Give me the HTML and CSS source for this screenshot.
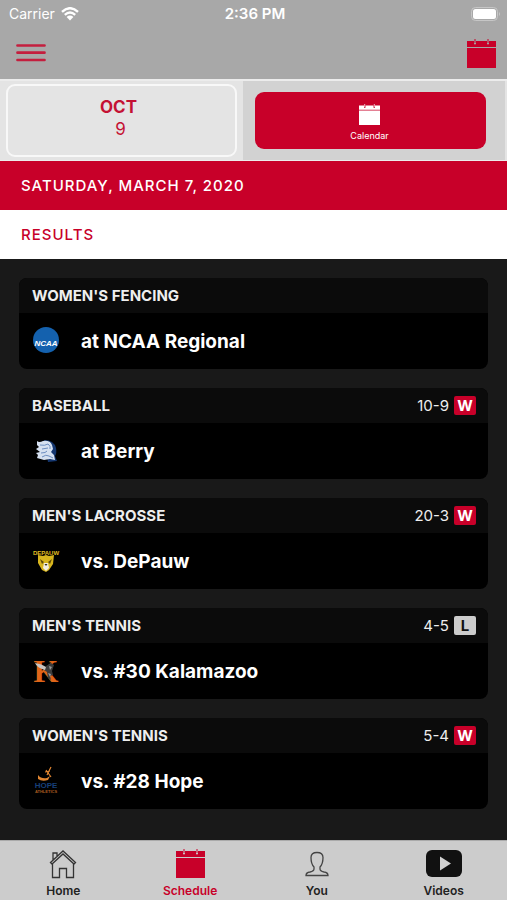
FILE: index.html
```html
<!DOCTYPE html>
<html lang="en">
<head>
    <meta charset="UTF-8">
    <meta name="viewport" content="width=device-width, initial-scale=1.0">
    <title>Schedule</title>
    <link rel="stylesheet" href="styles.css">
</head>
<body>
    <!-- Shared calendar icon -->
    <svg class="defs" width="0" height="0" aria-hidden="true">
        <symbol id="calendar" viewBox="0 0 29 29">
            <path d="M0 2h7v2.5a1 1 0 0 0 2 0V2h11v2.5a1 1 0 0 0 2 0V2h7v6H0zM0 9h29v20H0z"/>
            <path d="M7.5 0h1v4h-1zM20.5 0h1v4h-1z"/>
        </symbol>
    </svg>

    <header>
        <div class="status-bar">
            <div class="carrier">
                <span>Carrier</span>
                <svg width="18" height="14" viewBox="0 0 18 14" aria-hidden="true">
                    <path d="M1 4.8Q9-2.4 17 4.8M3.8 7.8q5.2-4.4 10.4 0" fill="none" stroke="#fff" stroke-width="2.4"/>
                    <path d="M5.6 10q3.4-2.8 6.8 0L9 13.6z" fill="#fff"/>
                </svg>
            </div>
            <span class="time">2:36 PM</span>
            <div class="battery">
                <svg width="30" height="14" viewBox="0 0 30 14" aria-hidden="true">
                    <rect x="0.5" y="0.5" width="26" height="13" rx="4" fill="none" stroke="#c6c6c6"/>
                    <rect x="2" y="2" width="23" height="10" rx="2.5" fill="#fff"/>
                    <path d="M28 5q2 2 0 4z" fill="#c6c6c6"/>
                </svg>
            </div>
        </div>
        <div class="nav-bar">
            <button class="icon-button" aria-label="Menu">
                <svg width="30" height="18" viewBox="0 0 30 18">
                    <path d="M1.5 1.5h27M1.5 8.7h27M1.5 16h27" stroke="#c41e3e" stroke-width="2.7" stroke-linecap="round"/>
                </svg>
            </button>
            <button class="icon-button" aria-label="Open calendar">
                <svg class="calendar-icon" width="29" height="29"><use href="#calendar"/></svg>
            </button>
        </div>
    </header>

    <div class="picker">
        <div class="picker-date">
            <button class="date-button">
                <span class="month">OCT</span>
                <span class="day">9</span>
            </button>
        </div>
        <div class="picker-calendar">
            <button class="calendar-button">
                <svg width="21" height="21"><use href="#calendar"/></svg>
                <span>Calendar</span>
            </button>
        </div>
    </div>

    <h1 class="date-heading">SATURDAY, MARCH 7, 2020</h1>
    <h2 class="results-heading">RESULTS</h2>

    <main>
        <article class="game">
            <div class="game-header">
                <h3>WOMEN'S FENCING</h3>
            </div>
            <div class="game-body">
                <svg class="logo" viewBox="0 0 28 28" role="img" aria-label="NCAA">
                    <circle cx="14" cy="13" r="13" fill="#1461ae"/>
                    <text x="14" y="19" text-anchor="middle" class="logo-text ncaa">NCAA</text>
                </svg>
                <p>at NCAA Regional</p>
            </div>
        </article>

        <article class="game">
            <div class="game-header">
                <h3>BASEBALL</h3>
                <div class="score">10-9 <span class="badge win">W</span></div>
            </div>
            <div class="game-body">
                <svg class="logo" viewBox="0 0 28 28" role="img" aria-label="Berry">
                    <path d="M12 3q10 0 12 8 1 5-1 8l2 5-9 1z" fill="#14366f"/>
                    <path d="M5 4q2 2 6 0 7-1 9 4l1 4-2 3 3 3 1 5-5-1-6 1-7-2 1-3-2-2 4-1-4-3 3-2-2-2z" fill="#d5e0f0"/>
                    <path d="M8 8q5 1 8-1 3 2 2 5M10 12l6-1M9 16q5 0 6-2M10 20q4-3 7-1l4 2" fill="none" stroke="#6c8dc0" stroke-width="1"/>
                </svg>
                <p>at Berry</p>
            </div>
        </article>

        <article class="game">
            <div class="game-header">
                <h3>MEN'S LACROSSE</h3>
                <div class="score">20-3 <span class="badge win">W</span></div>
            </div>
            <div class="game-body">
                <svg class="logo" viewBox="0 0 28 28" role="img" aria-label="DePauw">
                    <path d="M6 8l5 1 3-1 3 1 5-1-1 9-4 6-3 2-4-2-4-7z" fill="#d8b51d"/>
                    <path d="M8 12l4 3-2 2zM20 12l-4 3 2 2z" fill="#5d4a08"/>
                    <path d="M12 16h4l1 5-3 3-3-3z" fill="#f2eee0"/>
                    <path d="M12.500 17h3l-1.500 2z" fill="#332c14"/>
                    <text x="14" y="8" text-anchor="middle" class="logo-text depauw">DEPAUW</text>
                </svg>
                <p>vs. DePauw</p>
            </div>
        </article>

        <article class="game">
            <div class="game-header">
                <h3>MEN'S TENNIS</h3>
                <div class="score">4-5 <span class="badge loss">L</span></div>
            </div>
            <div class="game-body">
                <svg class="logo" viewBox="0 0 28 28" role="img" aria-label="Kalamazoo">
                    <text x="14" y="25" text-anchor="middle" class="logo-text kalamazoo">K</text>
                    <path d="M14 9l5-3 3 2-2 6 1 4-3 1 1 4-3-2-1-6-3-2z" fill="#3c3c3c"/>
                    <path d="M3 6q7 1 11 4l-1 3q-8-2-10-7z" fill="#c9c4c0"/>
                    <path d="M17 9l3 1-2 3zM16 16l3 1-1 3z" fill="#999"/>
                </svg>
                <p>vs. #30 Kalamazoo</p>
            </div>
        </article>

        <article class="game">
            <div class="game-header">
                <h3>WOMEN'S TENNIS</h3>
                <div class="score">5-4 <span class="badge win">W</span></div>
            </div>
            <div class="game-body">
                <svg class="logo" viewBox="0 0 28 28" role="img" aria-label="Hope">
                    <path d="M6 8q3 4 9 3l3-2-2 4q-6 2-10-1z" fill="#e28631"/>
                    <path d="M14 3l5 7M19 0l-4 8M13 5l5-1" fill="none" stroke="#e28631" stroke-width="1.200"/>
                    <text x="14" y="21" text-anchor="middle" class="logo-text hope">HOPE</text>
                    <text x="14" y="26" text-anchor="middle" class="logo-text athletics">ATHLETICS</text>
                </svg>
                <p>vs. #28 Hope</p>
            </div>
        </article>
    </main>

    <nav class="tab-bar">
        <a href="#home">
            <svg width="28" height="30" viewBox="0 0 28 30">
                <path d="M1.500 13.500L14 2l12.500 11.500-1.500 1.500L14 5 3 15zM3.500 14.500V28.500h7v-9h7v9h7v-14M4 11V4h4v3.500" fill="none" stroke="#333" stroke-width="1.300"/>
            </svg>
            <span>Home</span>
        </a>
        <a href="#schedule" class="active">
            <svg width="29" height="30" viewBox="0 0 29 30"><use href="#calendar" width="29" height="29"/></svg>
            <span>Schedule</span>
        </a>
        <a href="#you">
            <svg width="26" height="30" viewBox="0 0 26 30">
                <path d="M2 26.500q0-3 4-3.500 4-1 4-3v-2q-3-3-3-9.500 0-5 6-5t6 5q0 6.500-3 9.500v2q0 2 4 3 4 .5 4 3.500z" fill="none" stroke="#444" stroke-width="1.300"/>
            </svg>
            <span>You</span>
        </a>
        <a href="#videos">
            <svg width="38" height="30" viewBox="0 0 38 30">
                <rect x="1" y="1" width="36" height="27" rx="6" fill="#111"/>
                <path d="M15 7.500v14L26 14.500z" fill="#d2d2d2"/>
            </svg>
            <span>Videos</span>
        </a>
    </nav>
</body>
</html>
```

FILE: styles.css
```css
* {
    box-sizing: border-box;
}
body {
    display: flex;
    flex-direction: column;
    min-height: 100vh;
    margin: 0;
    font-family: Inter, 'Liberation Sans', sans-serif;
    color: #fff;
    background-color: #191919;
}
h1, h2, h3, p {
    margin: 0;
}
button {
    padding: 0;
    border: none;
    background: none;
    font-family: inherit;
    cursor: pointer;
}
svg {
    display: block;
    flex-shrink: 0;
}
.defs {
    position: absolute;
}

/* Header */
header {
    background-color: #a8a8a8;
}
.status-bar {
    display: grid;
    grid-template-columns: 1fr auto 1fr;
    align-items: center;
    height: 27px;
    padding: 0 6px 0 9px;
    font-size: 14px;
}
.carrier {
    display: flex;
    gap: 6px;
    align-items: center;
}
.time {
    font-size: 15px;
    font-weight: 600;
}
.battery {
    justify-self: end;
}
.nav-bar {
    display: flex;
    justify-content: space-between;
    align-items: center;
    height: 52px;
    padding: 0 11px 0 16px;
}
.calendar-icon {
    fill: #c80029;
}

/* Date picker */
.picker {
    display: flex;
    height: 82px;
    padding-right: 2px;
    border-top: 2px solid #ececec;
    border-bottom: 1px solid #ececec;
    background-color: #e4e4e4;
}
.picker-date {
    flex: 1;
    padding: 3px 6px;
}
.date-button {
    display: flex;
    flex-direction: column;
    align-items: center;
    justify-content: center;
    width: 100%;
    height: 100%;
    padding: 0 6px 6px 0;
    border: 2px solid #f8f8f8;
    border-radius: 9px;
    color: #c41234;
    font-size: 17px;
    line-height: 22px;
}
.month {
    font-weight: 700;
}
.day {
    padding-left: 4px;
}
.picker-calendar {
    flex: 1;
    padding: 11px 19px 11px 12px;
    background-color: #d2d2d2;
}
.calendar-button {
    display: flex;
    flex-direction: column;
    gap: 6px;
    align-items: center;
    justify-content: center;
    width: 100%;
    height: 100%;
    padding: 3px 2px 0 0;
    border-radius: 9px;
    background-color: #c80029;
    color: #fff;
    fill: #fff;
    font-size: 9px;
    line-height: 10px;
}

/* Section headings */
.date-heading,
.results-heading {
    padding: 0 21px;
    font-size: 15px;
    font-weight: 500;
    line-height: 49px;
    letter-spacing: 1px;
}
.date-heading {
    background-color: #c80029;
}
.results-heading {
    background-color: #fff;
    color: #c80029;
}

/* Games */
main {
    display: flex;
    flex: 1;
    flex-direction: column;
    gap: 19px;
    padding: 19px;
}
.game {
    border-radius: 8px;
    overflow: hidden;
    background-color: #000;
}
.game-header {
    display: flex;
    justify-content: space-between;
    align-items: center;
    height: 35px;
    padding: 0 12px 0 13px;
    background-color: #0b0b0b;
    color: #eee;
}
.game-header h3 {
    font-size: 15px;
    font-weight: 700;
}
.score {
    display: flex;
    gap: 5px;
    align-items: center;
    font-size: 15px;
}
.badge {
    width: 22px;
    border-radius: 2px;
    font-weight: 700;
    line-height: 19px;
    text-align: center;
}
.win {
    background-color: #c80029;
    color: #fff;
}
.loss {
    background-color: #ccc;
    color: #111;
}
.game-body {
    display: flex;
    gap: 21px;
    align-items: center;
    height: 56px;
    padding: 0 13px;
}
.game-body p {
    font-size: 19px;
    font-weight: 700;
}
.logo {
    width: 28px;
    height: 28px;
    overflow: visible;
}
.logo-text {
    font-family: 'Liberation Sans', sans-serif;
    font-weight: 700;
}
.ncaa {
    fill: #fff;
    font-size: 8px;
    font-style: italic;
}
.depauw {
    fill: #e0bf21;
    font-size: 6px;
}
.kalamazoo {
    fill: #df6519;
    font-family: 'Liberation Serif', serif;
    font-size: 32px;
}
.hope {
    fill: #173f79;
    font-size: 8px;
}
.athletics {
    fill: #a85c20;
    font-size: 4px;
}

/* Tab bar */
.tab-bar {
    display: flex;
    height: 60px;
    border-top: 1px solid #aaa;
    background-color: #ccc;
}
.tab-bar a {
    display: flex;
    flex: 1;
    flex-direction: column;
    gap: 4px;
    align-items: center;
    padding-top: 8px;
    color: #222;
    font-size: 12px;
    font-weight: 600;
    line-height: 16px;
    text-decoration: none;
}
.tab-bar .active {
    color: #c80029;
    fill: #c80029;
}
```
